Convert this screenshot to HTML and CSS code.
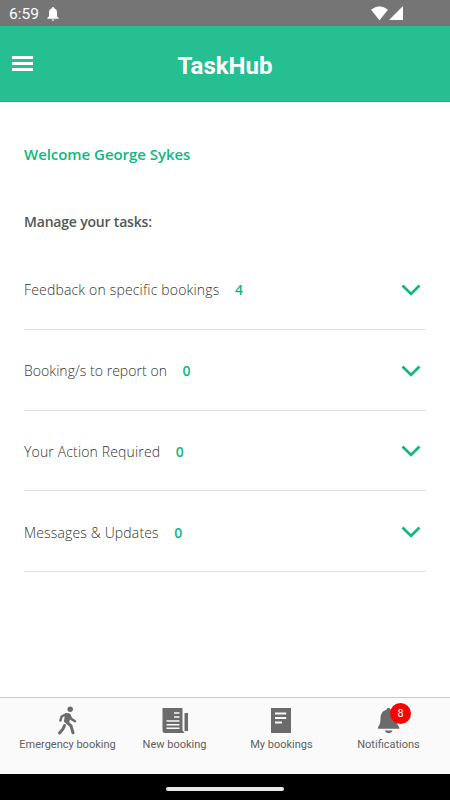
FILE: index.html
```html
<!DOCTYPE html>
<html lang="en">
<head>
<meta charset="utf-8">
<title>TaskHub</title>
<link rel="stylesheet" href="styles.css">
</head>
<body>
<div class="status">
  <span class="clock">6:59</span>
  <svg class="status-bell" width="12" height="14" viewBox="0 0 12 14"><path fill="#fff" d="M6 0a1.1 1.1 0 0 1 1.1 1.2C9.2 1.8 10 3.5 10 5.500V9.300l1.700 1.700v.8H.3V11L2 9.300V5.500C2 3.500 2.800 1.800 4.900 1.200A1.100 1.100 0 0 1 6 0zM4.600 12.400h2.800a1.400 1.400 0 0 1-2.800 0z"/></svg>
  <svg class="signals" width="33" height="15" viewBox="0 0 33 15"><path fill="#fff" d="M0 3.700Q8.500-3.300 17 3.700L8.500 14.200zM32 0v14H18z"/></svg>
</div>
<header class="header">
  <button class="menu" aria-label="Menu"><i></i><i></i><i></i></button>
  <h1 class="title">TaskHub</h1>
</header>
<main class="main">
  <h2 class="welcome">Welcome George Sykes</h2>
  <h3 class="manage">Manage your tasks:</h3>
  <ul class="tasks">
    <li class="task"><span class="name feedback">Feedback on specific bookings</span><b class="count">4</b><svg class="chevron" width="20" height="12" viewBox="0 0 20 12"><path d="M1.500 1.500l8.500 8.400 8.500-8.400"/></svg></li>
    <li class="task"><span class="name report">Booking/s to report on</span><b class="count">0</b><svg class="chevron" width="20" height="12" viewBox="0 0 20 12"><path d="M1.500 1.500l8.500 8.400 8.500-8.400"/></svg></li>
    <li class="task"><span class="name action">Your Action Required</span><b class="count">0</b><svg class="chevron" width="20" height="12" viewBox="0 0 20 12"><path d="M1.500 1.500l8.500 8.400 8.500-8.400"/></svg></li>
    <li class="task"><span class="name messages">Messages &amp; Updates</span><b class="count">0</b><svg class="chevron" width="20" height="12" viewBox="0 0 20 12"><path d="M1.500 1.500l8.500 8.400 8.500-8.400"/></svg></li>
  </ul>
</main>
<nav class="nav">
  <a class="tab"><svg class="walker" width="30" height="30" viewBox="0 0 30 30"><circle cx="17.200" cy="3.200" r="2.700" fill="#6b6b6b"/><path class="limb" d="M7.400 14.500l1.200-4L13 8.300l3 .4 2.200 4.200 3.800 2.300" stroke-width="2.500"/><path fill="#6b6b6b" d="M12 7.500l4.500.3 1.500 1.500-2 8-5-1.500z"/><path class="limb" d="M12.500 15l5.500 4.800 2 7M11.500 19.500l-1.500 3.500-3.500 4" stroke-width="3"/></svg><span>Emergency booking</span></a>
  <a class="tab"><svg width="30" height="30" viewBox="0 0 30 30"><path fill="#6b6b6b" d="M2.500 2h20v22.300L24.500 27H5A2.500 2.500 0 0 1 2.500 24.500zM24.500 7H28v18h-3.500z"/><path stroke="#fafafa" stroke-width="1.400" d="M14 7h5.500M14 11h5.500M6.500 15h13M6.500 18.700h13M6.500 22.300h13"/></svg><span>New booking</span></a>
  <a class="tab"><svg width="30" height="30" viewBox="0 0 30 30"><path fill="#6b6b6b" d="M4 2h20v25H4z"/><path stroke="#fafafa" stroke-width="1.800" d="M8 7.500h11.200M8 12h11.200M8 16.500h7"/></svg><span>My bookings</span></a>
  <a class="tab"><svg width="30" height="30" viewBox="0 0 30 30"><path fill="#6b6b6b" d="M14.500 2c1.200 0 2 .7 2.200 1.700 4 1 6 4.300 6 8.300 0 5 .8 7.200 2.500 9v1.800H4V21c1.700-1.800 2.500-4 2.500-9 0-4 2-7.300 6-8.300C12.700 2.700 13.300 2 14.500 2zM10.800 24.500h7.700c-1 3.500-6.700 3.500-7.700 0z"/></svg><span>Notifications</span><em class="badge">8</em></a>
</nav>
<div class="system"><div class="handle"></div></div>
</body>
</html>
```
FILE: styles.css
```css
* { box-sizing: border-box; }
body {
  margin: 0;
  width: 450px;
  height: 800px;
  display: flex;
  flex-direction: column;
  overflow: hidden;
  background: #fff;
  font-family: Roboto, sans-serif;
}
svg { display: block; flex: none; }
.status {
  height: 26px;
  display: flex;
  align-items: center;
  padding: 0 46px 0 9px;
  background: #757575;
  color: #fff;
}
.clock { width: 38px; font-size: 15.500px; line-height: 26px; padding-top: 2px; }
.status-bell { margin-top: 1px; }
.signals { margin-left: auto; }
.header {
  height: 76px;
  position: relative;
  display: flex;
  align-items: center;
  justify-content: center;
  background: #26bf91;
  border-bottom: 1px solid #12b481;
}
.menu {
  position: absolute;
  left: 12px;
  top: 30px;
  width: 21px;
  padding: 0;
  border: 0;
  background: none;
  display: flex;
  flex-direction: column;
  gap: 3px;
}
.menu i { height: 3px; width: 21px; background: #fff; }
.title { margin: 4px 0 0; color: #fff; font-size: 24px; line-height: 30px; font-weight: 700; }
.main {
  flex: 1;
  padding: 40px 24px 0;
  font-family: "Open Sans", "Noto Sans", sans-serif;
}
.welcome { margin: 0; color: #11b780; font-size: 15px; line-height: 24px; font-weight: 600; letter-spacing: -0.05px; white-space: nowrap; }
.manage { margin: 44px 0 0; color: #555; font-size: 14px; line-height: 24px; font-weight: 600; letter-spacing: -0.19px; }
.tasks { margin: 15px 0 0; padding: 0; list-style: none; }
.task {
  height: 80.8px;
  display: flex;
  align-items: center;
  border-bottom: 1px solid #e1e1e1;
  padding: 2px 5px 0 0;
}
.name { color: #333; font-size: 14px; font-weight: 300; white-space: nowrap; }
.feedback { letter-spacing: 0.17px; }
.report { letter-spacing: 0.04px; }
.action { letter-spacing: 0.15px; }
.messages { letter-spacing: 0.15px; }
.count { margin-left: 15.500px; color: #11b780; font-size: 14px; font-weight: 600; }
.chevron { margin-left: auto; }
.chevron path { fill: none; stroke: #11b780; stroke-width: 2.800; }
.nav {
  height: 77px;
  display: flex;
  padding: 8px 8px 0 14px;
  border-top: 1px solid #c9c9d1;
  background: #fafafa;
}
.tab {
  flex: 1 1 0;
  min-width: 0;
  position: relative;
  display: flex;
  flex-direction: column;
  align-items: center;
  color: #606060;
  font-size: 11px;
  line-height: 17px;
  white-space: nowrap;
}
.limb { fill: none; stroke: #6b6b6b; stroke-linecap: round; stroke-linejoin: round; }
.badge {
  position: absolute;
  left: 55px;
  top: -3px;
  width: 21px;
  height: 21px;
  border-radius: 50%;
  background: #f00;
  color: #fff;
  font-size: 11px;
  font-style: normal;
  line-height: 21px;
  text-align: center;
}
.system { height: 26px; background: #000; display: flex; justify-content: center; align-items: center; padding-top: 4px; }
.handle { width: 118px; height: 4px; border-radius: 2px; background: #e8e8e8; }
```
